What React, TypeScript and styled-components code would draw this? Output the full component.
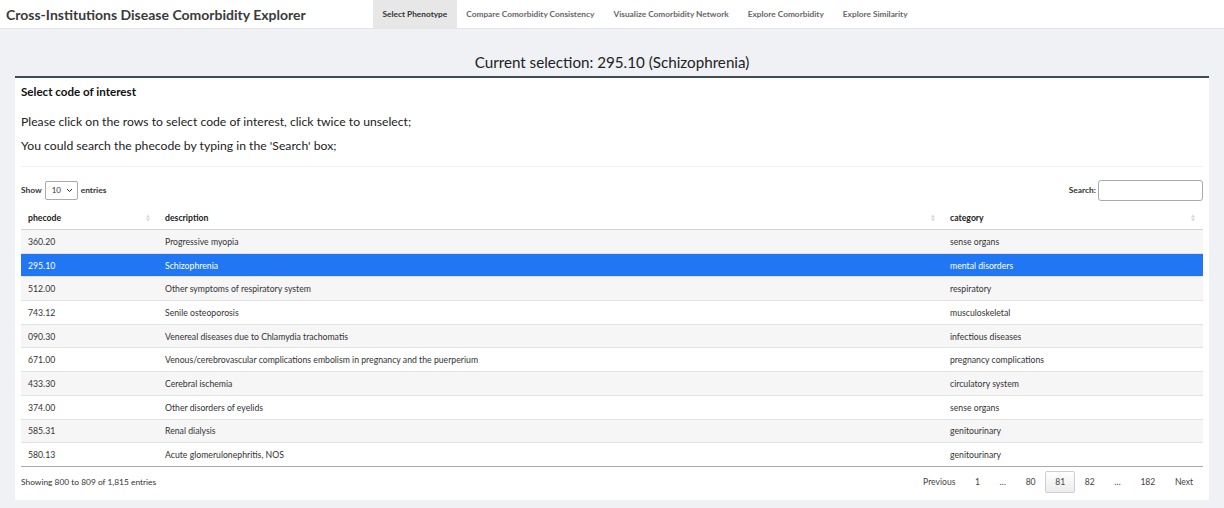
import React from 'react';
import styled, { createGlobalStyle } from 'styled-components';

const GlobalStyle = createGlobalStyle`
  html, body {
    margin: 0;
    padding: 0;
    background: #eff1f5;
    font-family: 'Lato', 'Open Sans', sans-serif;
    color: #333;
  }
`;

const rows = [
  { code: '360.20', desc: 'Progressive myopia', cat: 'sense organs' },
  { code: '295.10', desc: 'Schizophrenia', cat: 'mental disorders', selected: true },
  { code: '512.00', desc: 'Other symptoms of respiratory system', cat: 'respiratory' },
  { code: '743.12', desc: 'Senile osteoporosis', cat: 'musculoskeletal' },
  { code: '090.30', desc: 'Venereal diseases due to Chlamydia trachomatis', cat: 'infectious diseases' },
  { code: '671.00', desc: 'Venous/cerebrovascular complications embolism in pregnancy and the puerperium', cat: 'pregnancy complications' },
  { code: '433.30', desc: 'Cerebral ischemia', cat: 'circulatory system' },
  { code: '374.00', desc: 'Other disorders of eyelids', cat: 'sense organs' },
  { code: '585.31', desc: 'Renal dialysis', cat: 'genitourinary' },
  { code: '580.13', desc: 'Acute glomerulonephritis, NOS', cat: 'genitourinary' },
];

const tabs = [
  'Select Phenotype',
  'Compare Comorbidity Consistency',
  'Visualize Comorbidity Network',
  'Explore Comorbidity',
  'Explore Similarity',
];

const pages = ['Previous', '1', '…', '80', '81', '82', '…', '182', 'Next'];

const Navbar = styled.nav`
  display: flex;
  align-items: stretch;
  height: 28px;
  background: #fff;
  border-bottom: 1px solid #e3e4e8;
`;

const Brand = styled.div`
  display: flex;
  align-items: center;
  width: 367px;
  padding-left: 6px;
  font-size: 14px;
  font-weight: 700;
  color: #3a3a3a;
  white-space: nowrap;
`;

const Tab = styled.div<{ $active?: boolean }>`
  display: flex;
  align-items: center;
  padding: 0 9.5px;
  font-size: 8.3px;
  font-weight: 700;
  white-space: nowrap;
  color: ${p => (p.$active ? '#333' : '#666')};
  background: ${p => (p.$active ? '#e7e7e7' : 'transparent')};
`;

const Main = styled.main`
  padding: 0 15px;
`;

const Heading = styled.h3`
  margin: 0;
  height: 47px;
  display: flex;
  align-items: flex-end;
  justify-content: center;
  padding-bottom: 5px;
  box-sizing: border-box;
  font-size: 15.2px;
  font-weight: 400;
  color: #222;
`;

const Box = styled.section`
  background: #fff;
  border-top: 2px solid #3d4b5a;
  padding: 0 6px 3px 6px;
`;

const BoxTitle = styled.div`
  height: 31px;
  display: flex;
  align-items: center;
  padding-bottom: 4px;
  box-sizing: border-box;
  font-size: 11.6px;
  font-weight: 700;
  color: #111;
`;

const Para = styled.p`
  margin: 0;
  height: 24px;
  display: flex;
  align-items: center;
  font-size: 12.2px;
  color: #222;
`;

const Rule = styled.hr`
  margin: 9px 0 0 0;
  border: 0;
  border-top: 1px solid #eef0f2;
`;

const Controls = styled.div`
  display: flex;
  justify-content: space-between;
  align-items: center;
  height: 34px;
  margin-top: 5px;
  padding-top: 2px;
  box-sizing: border-box;
  font-size: 8.4px;
  font-weight: 700;
  color: #333;
`;

const Length = styled.label`
  display: flex;
  align-items: center;
  gap: 3px;
`;

const Select = styled.div`
  width: 33px;
  height: 19px;
  box-sizing: border-box;
  border: 1px solid #aaa;
  border-radius: 2px;
  display: flex;
  align-items: center;
  justify-content: space-between;
  padding: 0 4px 0 6px;
  font-weight: 400;
  font-size: 8px;
`;

const SearchBox = styled.label`
  display: flex;
  align-items: center;
  gap: 2px;
`;

const Input = styled.div`
  width: 105px;
  height: 21px;
  box-sizing: border-box;
  border: 1px solid #aaa;
  border-radius: 3px;
`;

const Table = styled.table`
  width: 100%;
  border-collapse: collapse;
  font-size: 8.7px;
`;

const Th = styled.th<{ $w?: string }>`
  position: relative;
  text-align: left;
  font-weight: 700;
  height: 23px;
  padding: 0 7px;
  width: ${p => p.$w || 'auto'};
  border-bottom: 1px solid #d4d4d4;
  color: #222;
`;

const SortIcon = styled.span`
  position: absolute;
  right: 8px;
  top: 50%;
  transform: translateY(-50%);
  display: flex;
  flex-direction: column;
  gap: 1px;
  &::before, &::after {
    content: '';
    border-left: 2.5px solid transparent;
    border-right: 2.5px solid transparent;
  }
  &::before { border-bottom: 3px solid #d8d8d8; }
  &::after { border-top: 3px solid #d8d8d8; }
`;

const Tr = styled.tr<{ $odd: boolean; $selected?: boolean }>`
  height: 23.7px;
  background: ${p => (p.$selected ? '#2176f4' : p.$odd ? '#f6f6f6' : '#fff')};
  color: ${p => (p.$selected ? '#fff' : '#333')};
`;

const Td = styled.td`
  padding: 0 7px;
  border-top: 1px solid #e2e2e2;
`;

const TBody = styled.tbody`
  tr:last-child td { border-bottom: 1px solid #aaa; }
`;

const Footer = styled.div`
  display: flex;
  justify-content: space-between;
  align-items: center;
  height: 30px;
  font-size: 8.4px;
  color: #333;
`;

const Pager = styled.div`
  display: flex;
  align-items: center;
`;

const PageBtn = styled.span<{ $current?: boolean }>`
  display: flex;
  align-items: center;
  justify-content: center;
  height: 22px;
  padding: 0 8.8px;
  box-sizing: border-box;
  font-size: 8.6px;
  color: #444;
  border: 1px solid ${p => (p.$current ? '#cfcfcf' : 'transparent')};
  border-radius: 2px;
  background: ${p => (p.$current ? 'linear-gradient(#fff, #ececec)' : 'transparent')};
`;

const App = () => {
  return (
    <>
      <GlobalStyle />
      <Navbar>
        <Brand>Cross-Institutions Disease Comorbidity Explorer</Brand>
        {tabs.map((t, i) => (
          <Tab key={t} $active={i === 0}>{t}</Tab>
        ))}
      </Navbar>
      <Main>
        <Heading>Current selection: 295.10 (Schizophrenia)</Heading>
        <Box>
          <BoxTitle>Select code of interest</BoxTitle>
          <Para>Please click on the rows to select code of interest, click twice to unselect;</Para>
          <Para>You could search the phecode by typing in the 'Search' box;</Para>
          <Rule />
          <Controls>
            <Length>
              Show
              <Select>
                10
                <svg width="7" height="5" viewBox="0 0 7 5">
                  <path d="M1 1l2.5 2.5L6 1" fill="none" stroke="#333" strokeWidth="1" />
                </svg>
              </Select>
              entries
            </Length>
            <SearchBox>
              Search:
              <Input />
            </SearchBox>
          </Controls>
          <Table>
            <thead>
              <tr>
                <Th $w="123px">phecode<SortIcon /></Th>
                <Th>description<SortIcon /></Th>
                <Th $w="246px">category<SortIcon /></Th>
              </tr>
            </thead>
            <TBody>
              {rows.map((r, i) => (
                <Tr key={r.code} $odd={i % 2 === 0} $selected={r.selected}>
                  <Td>{r.code}</Td>
                  <Td>{r.desc}</Td>
                  <Td>{r.cat}</Td>
                </Tr>
              ))}
            </TBody>
          </Table>
          <Footer>
            <span>Showing 800 to 809 of 1,815 entries</span>
            <Pager>
              {pages.map((p, i) => (
                <PageBtn key={i} $current={p === '81'}>{p}</PageBtn>
              ))}
            </Pager>
          </Footer>
        </Box>
      </Main>
    </>
  );
};

export default App;
